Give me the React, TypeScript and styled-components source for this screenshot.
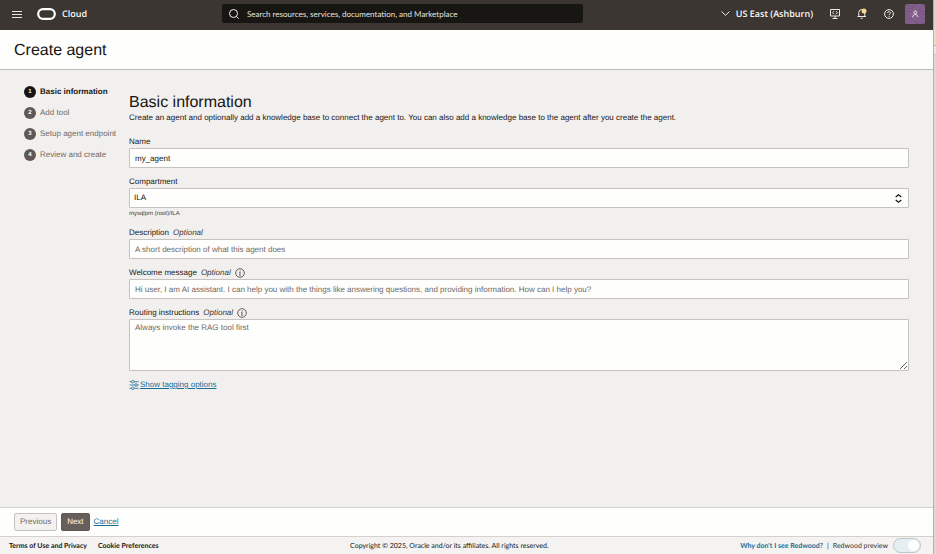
import React from "react";
import styled, { createGlobalStyle } from "styled-components";

const SANS = '"Liberation Sans", Arial, sans-serif';
const BRAND = '"Open Sans", "Noto Sans", sans-serif';
const BRAND_NARROW = 'Lato, "Open Sans", sans-serif';

const GlobalStyle = createGlobalStyle`
  *, *::before, *::after { box-sizing: border-box; }
  body { margin: 0; background: #d8d7d6; text-rendering: geometricPrecision; }
  button, input, select, textarea { font: inherit; color: inherit; margin: 0; text-rendering: inherit; }
`;

const Desktop = styled.div`
  display: grid;
  grid-template-columns: minmax(0, 1fr) 3px;
  min-height: 100vh;
  font-family: ${SANS};
  font-size: 8px;
  line-height: 10px;
  color: #161513;
`;

const Backdrop = styled.div`
  border-left: 1px solid #b4b2b0;
  background: linear-gradient(
    #d6d4d2 0 29px,
    #e6dfc2 29px 45px,
    #b4b3b2 45px 46px,
    #e6e6e6 46px 54px,
    #c6c6c6 54px 55px,
    #d9d9d9 55px
  );
`;

const Page = styled.div`
  display: flex;
  flex-direction: column;
  background: #f2f0ef;
`;

const TopBar = styled.header`
  display: grid;
  grid-template-columns: 210px minmax(160px, 361px) 1fr;
  align-items: center;
  height: 30px;
  padding: 0 8px 3px 12px;
  background: #3b3631;
  color: #fbf9f8;
  font-family: ${BRAND};
`;

const Row = styled.div<{ $gap: number; $end?: boolean }>`
  display: flex;
  align-items: center;
  gap: ${(p) => p.$gap}px;
  justify-content: ${(p) => (p.$end ? "flex-end" : "flex-start")};
`;

const IconButton = styled.button`
  display: flex;
  padding: 0;
  border: 0;
  background: none;
`;

const BrandLink = styled.a`
  display: flex;
  align-items: center;
  gap: 6px;
  color: inherit;
  text-decoration: none;
  font-size: 9px;
  line-height: 12px;
  font-weight: 600;
`;

const Search = styled.label`
  display: flex;
  align-items: center;
  gap: 8px;
  height: 19px;
  padding: 0 7px;
  border-radius: 2px;
  background: #181613;
`;

const SearchInput = styled.input`
  flex: 1;
  min-width: 0;
  padding: 0;
  border: 0;
  outline: 0;
  background: none;
  font-family: ${BRAND_NARROW};
  font-size: 8px;
  line-height: 12px;
  &::placeholder { color: #e4e2df; opacity: 1; }
`;

const RegionButton = styled.button`
  display: flex;
  align-items: center;
  gap: 6px;
  padding: 0;
  border: 0;
  background: none;
  font-size: 9px;
  line-height: 12px;
  font-weight: 600;
`;

const Avatar = styled.button`
  display: flex;
  padding: 0;
  border: 0;
  border-radius: 2px;
  overflow: hidden;
  background: #84618c;
`;

const TitleBar = styled.div`
  display: flex;
  align-items: center;
  height: 40px;
  padding: 2px 14px 0;
  border-bottom: 1px solid #bcb9b7;
  background: #fefefc;
`;

const PageTitle = styled.h1`
  margin: 0;
  font-size: 16px;
  line-height: 20px;
  font-weight: 400;
`;

const Body = styled.div`
  display: grid;
  grid-template-columns: 105px minmax(0, 1fr);
  flex: 1;
  align-items: start;
  padding: 15px 24px 20px;
`;

const Steps = styled.ol`
  display: flex;
  flex-direction: column;
  gap: 7px;
  margin: 0;
  padding: 0;
  list-style: none;
  white-space: nowrap;
`;

const Step = styled.li<{ $current?: boolean }>`
  display: flex;
  align-items: center;
  gap: 4px;
  color: ${(p) => (p.$current ? "#161513" : "#6f6965")};
  font-weight: ${(p) => (p.$current ? 700 : 400)};
`;

const StepNumber = styled.span<{ $current?: boolean }>`
  width: 12px;
  height: 12px;
  border-radius: 50%;
  background: ${(p) => (p.$current ? "#161513" : "#5f5854")};
  color: #fff;
  font-size: 6px;
  line-height: 12px;
  font-weight: 700;
  text-align: center;
`;

const StepName = styled.span`
  line-height: 14px;
`;

const Form = styled.form`
  display: flex;
  flex-direction: column;
  padding-top: 8px;
`;

const SectionTitle = styled.h2`
  margin: 0;
  font-size: 16px;
  line-height: 20px;
  font-weight: 400;
`;

const Intro = styled.p`
  margin: 0 0 13px;
`;

const Field = styled.div`
  display: flex;
  flex-direction: column;
  margin-bottom: 8px;
`;

const LabelRow = styled.div`
  display: flex;
  align-items: center;
  gap: 4px;
  min-height: 12px;
`;

const Optional = styled.em`
  margin-left: 4px;
  color: #3c3835;
`;

const control = `
  display: block;
  width: 100%;
  border: 1px solid #c6c2bf;
  border-radius: 1px;
  outline: 0;
  background: #fefefc;
  font-size: 8px;
  line-height: 10px;
`;

const TextInput = styled.input`
  ${control}
  height: 20px;
  padding: 0 5px;
  &::placeholder { color: #6f6965; opacity: 1; }
`;

const TextArea = styled.textarea`
  ${control}
  height: 52px;
  padding: 3px 5px;
  resize: vertical;
  &::placeholder { color: #6f6965; opacity: 1; }
`;

const SelectBox = styled.div`
  display: grid;
  align-items: center;
  > * { grid-area: 1 / 1; }
  > svg { justify-self: end; margin-right: 7px; pointer-events: none; }
`;

const Select = styled.select`
  ${control}
  height: 20px;
  padding: 0 4px;
  appearance: none;
`;

const Hint = styled.span`
  margin: 2px 0 1px;
  font-size: 6px;
  line-height: 8px;
  color: #3c3835;
`;

const Link = styled.a`
  display: inline-flex;
  align-items: center;
  color: #176d94;
`;

const TagRow = styled.div`
  display: flex;
  padding-top: 1px;
`;

const ActionBar = styled.div`
  display: flex;
  align-items: center;
  gap: 4px;
  height: 29px;
  padding: 0 14px;
  border-top: 1px solid #d3d0ce;
  background: #fefefc;
`;

const Button = styled.button<{ $primary?: boolean }>`
  height: 18px;
  padding: 0 5px;
  border: 1px solid ${(p) => (p.$primary ? "#5f5854" : "#c6c2bf")};
  border-radius: 2px;
  background: ${(p) => (p.$primary ? "#665f5b" : "#f4f2f1")};
  color: ${(p) => (p.$primary ? "#fff" : "#6f6965")};
`;

const Footer = styled.footer`
  display: flex;
  justify-content: space-between;
  align-items: center;
  height: 18px;
  padding: 0 12px 0 9px;
  border-top: 1px solid #d3d0ce;
  background: #f4f3f2;
  font-family: ${BRAND_NARROW};
  font-size: 7px;
  white-space: nowrap;
`;

const FooterLink = styled.a<{ $accent?: boolean }>`
  color: ${(p) => (p.$accent ? "#176d94" : "#161513")};
  font-weight: 700;
  text-decoration: none;
`;

const Switch = styled.input`
  appearance: none;
  width: 28px;
  height: 15px;
  padding: 1px;
  border: 1px solid #bfc6c8;
  border-radius: 8px;
  background: #e4eff3;
  &::before {
    content: "";
    display: block;
    width: 11px;
    height: 11px;
    margin-left: auto;
    border-radius: 50%;
    background: #fff;
  }
`;

const SwitchLabel = styled.label`
  display: flex;
  align-items: center;
  gap: 5px;
  color: #3c3835;
`;

const MenuIcon = () => (
  <svg width="10" height="8" viewBox="0 0 10 8" stroke="#e8e6e3" strokeWidth="1">
    <path d="M0 1.500h10M0 4.500h10M0 7.500h10" />
  </svg>
);

const LogoIcon = () => (
  <svg width="19" height="12" viewBox="0 0 19 12" fill="none">
    <rect x="1.200" y="1.200" width="16.600" height="9.600" rx="4.800" stroke="#fff" strokeWidth="2.200" />
  </svg>
);

const SearchIcon = () => (
  <svg width="10" height="10" viewBox="0 0 10 10" fill="none" stroke="#f0eeeb">
    <circle cx="4.500" cy="4.500" r="4" />
    <path d="M7.400 7.400 9.700 9.700" />
  </svg>
);

const ChevronIcon = () => (
  <svg width="9" height="5" viewBox="0 0 9 5" fill="none" stroke="#f0eeeb">
    <path d="M.5.5 4.500 4.300 8.500.5" />
  </svg>
);

const ConsoleIcon = () => (
  <svg width="10" height="10" viewBox="0 0 10 10" fill="none" stroke="#eceae7">
    <path d="M.5.5h9v6.500h-9zM5 7v2.500M2.500 9.500h5" />
    <path d="M4 2.200 2.500 3.700 4 5.200M6 2.200l1.500 1.500L6 5.200" />
  </svg>
);

const BellIcon = () => (
  <svg width="10" height="11" viewBox="0 0 10 11" fill="none" stroke="#eceae7">
    <path d="M.5 8.500h8.500M1.800 8.300V4.500a3 3 0 0 1 6 0v3.800M3.700 10.300h2" />
    <circle cx="7" cy="3" r="2.500" fill="#f8d58c" stroke="none" />
  </svg>
);

const HelpIcon = () => (
  <svg width="10" height="10" viewBox="0 0 10 10" fill="none" stroke="#f0eeeb">
    <circle cx="5" cy="5" r="4.400" />
    <path d="M3.600 4a1.400 1.400 0 1 1 2 1.250c-.45.22-.6.4-.6.850M5 6.900v.9" />
  </svg>
);

const AvatarIcon = () => (
  <svg width="20" height="20" viewBox="0 0 20 20" fill="none">
    <g stroke="#6d4d7c" strokeWidth=".7">
      <path d="M0 1c4 1 7 3 10 0M0 4c4 1 8 2 12-4M0 7l7 1M13 6l7-4M14 3l6-3M0 12l7 6M0 15l5 5M0 9l12 11M12 13l8 5M13 11l7 4M13 8l7 3M14 6l6 2M9 17l5 3M12 16l6 4" />
    </g>
    <g stroke="#f0e8f2" strokeWidth=".9">
      <circle cx="10.300" cy="8.500" r="1.400" />
      <path d="M7.600 13.200c.2-1.900 1.300-2.700 2.700-2.700s2.500.8 2.700 2.700" />
    </g>
  </svg>
);

const UpDownIcon = () => (
  <svg width="7" height="9" viewBox="0 0 7 9" fill="none" stroke="#161513" strokeWidth="1.200">
    <path d="M.7 3 3.500.8 6.300 3M.7 6 3.500 8.200 6.300 6" />
  </svg>
);

const InfoIcon = () => (
  <svg width="10" height="10" viewBox="0 0 10 10" fill="none" stroke="#3c3835" strokeWidth=".8">
    <circle cx="5" cy="5" r="4.300" />
    <path d="M5.200 2.400v1M4.300 4.400h.9L4.700 7.400h.9" />
  </svg>
);

const TagOptionsIcon = () => (
  <svg width="11" height="10" viewBox="0 0 11 10" fill="none" stroke="#176d94" strokeWidth=".8">
    <path d="M.5 1.700h2M5.200 1.700h4.500M.5 5h5M8.500 5h1.500M.5 8.300h2M5.200 8.300h4.500" />
    <circle cx="3.800" cy="1.700" r="1.300" />
    <circle cx="7" cy="5" r="1.300" />
    <circle cx="3.800" cy="8.300" r="1.300" />
  </svg>
);

const steps = ["Basic information", "Add tool", "Setup agent endpoint", "Review and create"];

export default function App() {
  return (
    <>
      <GlobalStyle />
      <Desktop>
        <Page>
          <TopBar>
            <Row $gap={15}>
              <IconButton aria-label="Menu"><MenuIcon /></IconButton>
              <BrandLink href="#"><LogoIcon />Cloud</BrandLink>
            </Row>
            <Search>
              <SearchIcon />
              <SearchInput
                aria-label="Search"
                placeholder="Search resources, services, documentation, and Marketplace"
              />
            </Search>
            <Row $gap={17} $end>
              <RegionButton><ChevronIcon />US East (Ashburn)</RegionButton>
              <IconButton aria-label="Developer tools"><ConsoleIcon /></IconButton>
              <IconButton aria-label="Notifications"><BellIcon /></IconButton>
              <Row $gap={11}>
                <IconButton aria-label="Help"><HelpIcon /></IconButton>
                <Avatar aria-label="Profile"><AvatarIcon /></Avatar>
              </Row>
            </Row>
          </TopBar>
          <TitleBar><PageTitle>Create agent</PageTitle></TitleBar>
          <Body>
            <Steps>
              {steps.map((name, i) => (
                <Step key={name} $current={i === 0}>
                  <StepNumber $current={i === 0}>{i + 1}</StepNumber>
                  <StepName>{name}</StepName>
                </Step>
              ))}
            </Steps>
            <Form>
              <SectionTitle>Basic information</SectionTitle>
              <Intro>
                Create an agent and optionally add a knowledge base to connect the agent to. You can also add a
                knowledge base to the agent after you create the agent.
              </Intro>
              <Field>
                <LabelRow><label htmlFor="name">Name</label></LabelRow>
                <TextInput id="name" defaultValue="my_agent" />
              </Field>
              <Field>
                <LabelRow><label htmlFor="compartment">Compartment</label></LabelRow>
                <SelectBox>
                  <Select id="compartment"><option>ILA</option></Select>
                  <UpDownIcon />
                </SelectBox>
                <Hint>mysqlpm (root)/ILA</Hint>
              </Field>
              <Field>
                <LabelRow><label htmlFor="description">Description<Optional>Optional</Optional></label></LabelRow>
                <TextInput id="description" placeholder="A short description of what this agent does" />
              </Field>
              <Field>
                <LabelRow>
                  <label htmlFor="welcome">Welcome message<Optional>Optional</Optional></label>
                  <IconButton type="button" aria-label="About welcome message"><InfoIcon /></IconButton>
                </LabelRow>
                <TextInput
                  id="welcome"
                  placeholder="Hi user, I am AI assistant. I can help you with the things like answering questions, and providing information. How can I help you?"
                />
              </Field>
              <Field>
                <LabelRow>
                  <label htmlFor="routing">Routing instructions<Optional>Optional</Optional></label>
                  <IconButton type="button" aria-label="About routing instructions"><InfoIcon /></IconButton>
                </LabelRow>
                <TextArea id="routing" placeholder="Always invoke the RAG tool first" />
              </Field>
              <TagRow><Link href="#"><TagOptionsIcon />Show tagging options</Link></TagRow>
            </Form>
          </Body>
          <ActionBar>
            <Button>Previous</Button>
            <Button $primary>Next</Button>
            <Link href="#">Cancel</Link>
          </ActionBar>
          <Footer>
            <Row $gap={11}>
              <FooterLink href="#">Terms of Use and Privacy</FooterLink>
              <FooterLink href="#">Cookie Preferences</FooterLink>
            </Row>
            <span>Copyright © 2025, Oracle and/or its affiliates. All rights reserved.</span>
            <Row $gap={4} $end>
              <FooterLink href="#" $accent>Why don't I see Redwood?</FooterLink>
              <span>|</span>
              <SwitchLabel>
                Redwood preview
                <Switch type="checkbox" role="switch" defaultChecked />
              </SwitchLabel>
            </Row>
          </Footer>
        </Page>
        <Backdrop />
      </Desktop>
    </>
  );
}
